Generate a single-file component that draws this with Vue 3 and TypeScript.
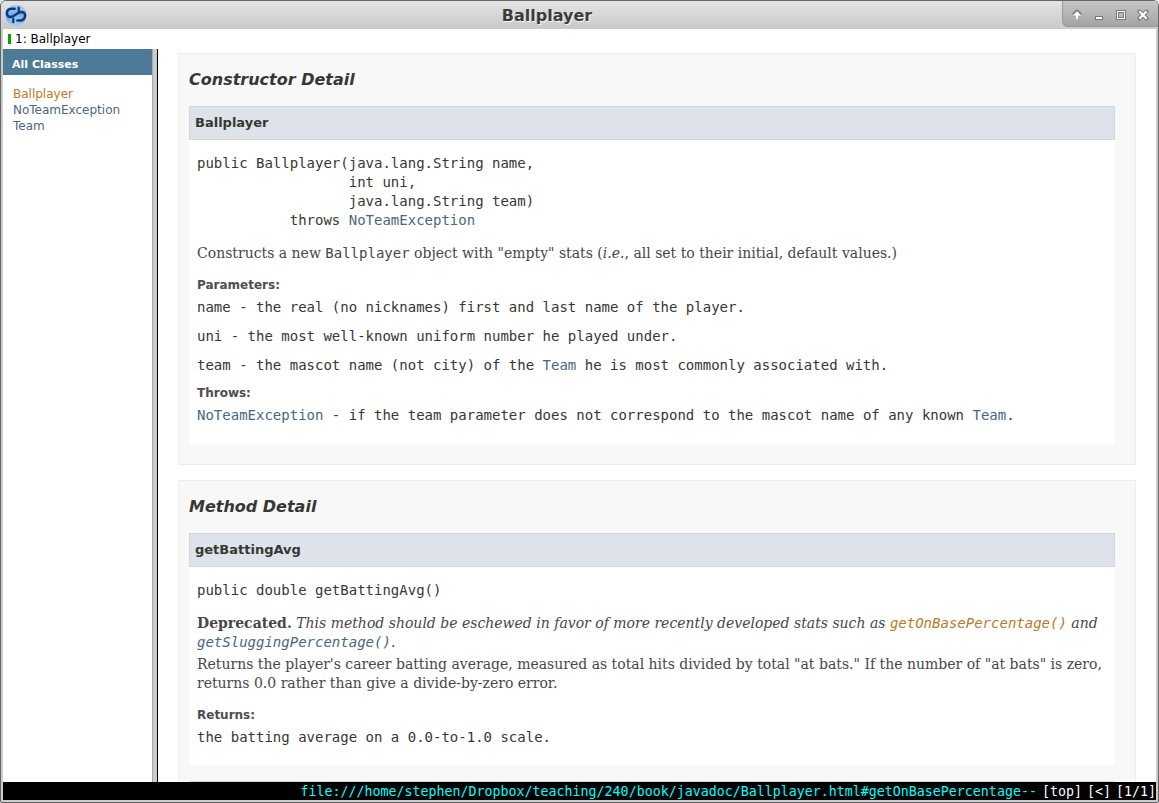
<script setup lang="ts">
const parameters = [
  { before: 'name - the real (no nicknames) first and last name of the player.', link: '', after: '' },
  { before: 'uni - the most well-known uniform number he played under.', link: '', after: '' },
  { before: 'team - the mascot name (not city) of the ', link: 'Team', after: ' he is most commonly associated with.' },
]
const signature = [
  'public Ballplayer(java.lang.String name,',
  '                  int uni,',
  '                  java.lang.String team)',
]
const url = 'file:///home/stephen/Dropbox/teaching/240/book/javadoc/Ballplayer.html#getOnBasePercentage--'
</script>

<template>
  <div class="window">
    <header class="titlebar">
      <svg class="logo" width="22" height="22" viewBox="0 0 22 22">
        <defs>
          <radialGradient id="ball" cx="0.5" cy="0.9" r="0.9">
            <stop offset="0" stop-color="#9fd0ff" />
            <stop offset="0.55" stop-color="#78aef2" />
            <stop offset="1" stop-color="#b4d2f4" />
          </radialGradient>
        </defs>
        <circle cx="11" cy="11" r="10.6" fill="url(#ball)" />
        <g fill="none" stroke="#0f3a76" stroke-width="2.5" stroke-linecap="round" stroke-linejoin="round">
          <path d="M9.6 4.800H6.500C3.600 5 1.900 6.800 1.900 9.200s1.700 3.900 4 3.700c2-.2 3.500-1.200 5.100-2.500s3.100-2.300 5.100-2.500c2.300-.2 4 1.300 4 3.700s-1.700 4.700-4.600 4.900h-3.100" />
          <path d="M13.700 3.600v3.600M8.300 14.600v3.600" stroke-width="2.300" />
        </g>
      </svg>
      <div class="title">Ballplayer</div>
      <div class="controls">
        <svg width="97" height="27" viewBox="0 0 97 27">
          <g fill="none" stroke="#777" stroke-width="4" stroke-linejoin="round">
            <path d="M11.5 15.200l3.500-3.500 3.500 3.500M15 12.500v6" />
            <path d="M77.500 11.500l7 7M84.500 11.500l-7 7" stroke-linecap="round" />
          </g>
          <path d="M11.300 15.300L15 11.400l3.700 3.900zM14 14h2v4.800h-2z" fill="#fff" stroke="#fff" stroke-width=".7" />
          <path d="M77.300 11.300l7.400 7.400M84.700 11.300l-7.400 7.400" stroke="#fff" stroke-width="2.200" />
          <path d="M33 16h8v4h-8z" fill="#777" />
          <path d="M34 17h6v2h-6z" fill="#fff" />
          <path d="M54 10h10v10h-10z" fill="#777" />
          <path d="M55 11h8v8h-8z" fill="#fff" />
          <path d="M56 12h6v6h-6z" fill="#777" />
          <path d="M57 13h4v4h-4z" fill="#bbb" />
        </svg>
      </div>
    </header>

    <div class="client">
      <div class="tabs"><span class="marker"></span>1: Ballplayer</div>
      <div class="frames">
        <nav class="sidebar">
          <div class="side-title">All Classes</div>
          <div class="class-list">
            <a class="active">Ballplayer</a>
            <a>NoTeamException</a>
            <a>Team</a>
          </div>
        </nav>
        <div class="divider"></div>
        <main class="page">
          <section class="detail">
            <h3>Constructor Detail</h3>
            <h4>Ballplayer</h4>
            <div class="body first">
              <div v-for="line in signature" :key="line" class="code-line">{{ line }}</div>
              <div class="code-line">{{ '           throws ' }}<a>NoTeamException</a></div>
              <p class="desc">Constructs a new <code>Ballplayer</code> object with "empty" stats (<i>i.e.</i>, all set to their initial, default values.)</p>
              <div class="label">Parameters:</div>
              <div v-for="p in parameters" :key="p.before" class="entry">{{ p.before }}<a v-if="p.link">{{ p.link }}</a>{{ p.after }}</div>
              <div class="label throws">Throws:</div>
              <div class="entry"><a>NoTeamException</a> - if the team parameter does not correspond to the mascot name of any known <a>Team</a>.</div>
            </div>
          </section>

          <section class="detail">
            <h3>Method Detail</h3>
            <h4>getBattingAvg</h4>
            <div class="body second">
              <div class="code-line">public double getBattingAvg()</div>
              <p class="desc"><b>Deprecated.</b>&nbsp;<i>This method should be eschewed in favor of more recently developed stats such as <code><a class="active">getOnBasePercentage()</a></code> and<br><code><a>getSluggingPercentage()</a></code>.</i></p>
              <p class="desc returns-text">Returns the player's career batting average, measured as total hits divided by total "at bats." If the number of "at bats" is zero,<br>returns 0.0 rather than give a divide-by-zero error.</p>
              <div class="label">Returns:</div>
              <div class="entry">the batting average on a 0.0-to-1.0 scale.</div>
            </div>
            <h4 class="next"></h4>
          </section>
        </main>
      </div>
      <footer class="status"><span class="url">{{ url }}</span><span>[top]</span><span>[&lt;]</span><span>[1/1]</span></footer>
    </div>
  </div>
</template>

<style>
body { background: #e8e8e8; overflow: hidden; }
</style>

<style scoped>
* { box-sizing: border-box; }
.window {
  width: 1159px; height: 803px; overflow: hidden;
  display: flex; flex-direction: column;
  border: 1px solid #656365; border-radius: 6px 6px 2px 2px;
  background: #ccc;
  font-family: "DejaVu Sans", sans-serif; color: #353833;
}
.titlebar {
  height: 28px; flex: none; display: flex; position: relative;
  background: linear-gradient(#e4e4e4, #c9c9c9);
}
.logo { margin: 3px 0 0 4px; }
.title {
  position: absolute; left: 0; right: 65px; top: 0; text-align: center;
  font: bold 16px/30px "DejaVu Sans", sans-serif; color: #3c3c3c;
  text-shadow: 1px 1px 0 #f4f4f4;
}
.controls {
  margin-left: auto; width: 96px; height: 26px; overflow: hidden;
  background: linear-gradient(#c6c6c6, #a4a4a4);
  border-left: 1px solid #999; border-bottom: 1px solid #999;
  border-bottom-left-radius: 6px;
}
.controls svg { display: block; margin: -1px 0 0 -1px; }
.client {
  flex: 1; min-height: 0; margin: 0 2px 2px; background: #fff;
  display: flex; flex-direction: column;
}
.tabs {
  height: 20px; flex: none; display: flex; align-items: center;
  padding-left: 5px; font-size: 12px; line-height: 20px; color: #000;
}
.marker { width: 3px; height: 10px; background: #00a800; margin-right: 4px; }
.frames { flex: 1; min-height: 0; display: flex; }
.sidebar { width: 149px; flex: none; }
.side-title {
  height: 26px; padding: 2px 0 0 9px; background: #4d7a97; color: #fff;
  font: bold 11px/27px "DejaVu Sans", sans-serif;
}
.class-list { padding: 11px 10px; display: flex; flex-direction: column; font-size: 12px; line-height: 16px; }
a { color: #4a6782; }
a.active { color: #bb7a2a; }
.divider { width: 6px; flex: none; background: #ccc; border-left: 1px solid #a8a8a8; border-right: 1px solid #000; }
.page { flex: 1; min-width: 0; overflow: hidden; padding: 4px 20px 0; }
.detail {
  border: 1px solid #ededed; background: #f8f8f8;
  padding: 0 20px 20px 10px; margin-bottom: 15px;
}
h3 { margin: 0; height: 52px; font: italic bold 16px/52px "DejaVu Sans", sans-serif; }
h4 {
  margin: 0; height: 34px; padding-left: 5px; background: #dee3e9;
  border: 1px solid #d0d9e0; font: bold 13px/31px "DejaVu Sans", sans-serif;
}
.body { background: #fff; padding: 14px 8px 0; }
.first { height: 304px; }
.second { height: 199px; }
.code-line, code, .entry { font-family: "DejaVu Sans Mono", monospace; font-size: 14px; }
.code-line { line-height: 19px; white-space: pre; }
.desc {
  margin: 14px 0 0; font: 14px/19px "DejaVu Serif", serif; color: #474747; white-space: nowrap;
}
.desc code { line-height: 1; }
.returns-text { margin-top: 3px; }
.label { margin-top: 14px; height: 16px; font-size: 12px; line-height: 16px; font-weight: bold; color: #4e4e4e; }
.entry { margin: 5px 0 10px; line-height: 19px; white-space: pre; }
.throws { margin-top: 0; }
.next { margin-top: 15px; }
.status {
  height: 18px; flex: none; background: #000; color: #fff;
  display: flex; justify-content: flex-end; gap: 5px;
  font: 13.3px/20px "DejaVu Sans Mono", monospace;
}
.url { color: #0ff; }
</style>
